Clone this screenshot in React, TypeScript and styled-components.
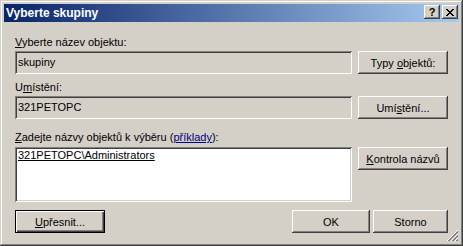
import React from "react";
import styled, { createGlobalStyle } from "styled-components";

const Global = createGlobalStyle`
  html, body { margin: 0; padding: 0; background: #D4D0C8; }
  body { font-family: "Liberation Sans", Arial, sans-serif; font-size: 11px; color: #000; }
  * { box-sizing: border-box; }
`;

const raised = `
  box-shadow: inset -1px -1px #404040, inset 1px 1px #FFFFFF, inset -2px -2px #808080, inset 2px 2px #D4D0C8;
`;
const sunken = `
  box-shadow: inset 1px 1px #808080, inset -1px -1px #FFFFFF, inset 2px 2px #404040, inset -2px -2px #D4D0C8;
`;

const Window = styled.div`
  width: 463px;
  height: 246px;
  padding: 4px;
  background: #D4D0C8;
  display: flex;
  flex-direction: column;
  box-shadow: inset -1px -1px #404040, inset 1px 1px #D4D0C8, inset -2px -2px #808080, inset 2px 2px #FFFFFF;
`;

const TitleBar = styled.div`
  height: 18px;
  display: flex;
  align-items: flex-start;
  padding-left: 2px;
  padding-right: 1px;
  background: linear-gradient(to right, #0A246A, #A6CAF0);
`;

const Title = styled.div`
  flex: 1;
  color: #fff;
  font-weight: bold;
  font-size: 12px;
  line-height: 18px;
  white-space: nowrap;
`;

const CaptionButtons = styled.div`
  display: flex;
  gap: 2px;
  margin-top: 1px;
`;

const CaptionButton = styled.div`
  width: 16px;
  height: 14px;
  background: #D4D0C8;
  ${raised}
  display: flex;
  align-items: center;
  justify-content: center;
  font-weight: bold;
  font-size: 11px;
  line-height: 14px;
`;

const Client = styled.div`
  position: relative;
  flex: 1;
  padding: 14px 10px 0 11px;
  display: grid;
  grid-template-columns: 337px 90px;
  column-gap: 6px;
  align-content: start;
`;

const Label = styled.div<{ $top: number }>`
  grid-column: 1 / -1;
  height: 13px;
  line-height: 13px;
  margin-top: ${(p) => p.$top}px;
  white-space: nowrap;
`;

const Field = styled.div<{ $top: number; $height: number; $white?: boolean }>`
  grid-column: 1;
  margin-top: ${(p) => p.$top}px;
  height: ${(p) => p.$height}px;
  background: ${(p) => (p.$white ? "#FFFFFF" : "#D4D0C8")};
  ${sunken}
  padding: ${(p) => (p.$white ? "2px 3px" : "0 3px")};
  line-height: ${(p) => (p.$white ? "13px" : `${p.$height}px`)};
  white-space: nowrap;
`;

const Button = styled.div<{ $top?: number; $width?: number; $default?: boolean }>`
  margin-top: ${(p) => p.$top ?? 0}px;
  width: ${(p) => (p.$width ? `${p.$width}px` : "auto")};
  height: 23px;
  background: #D4D0C8;
  display: flex;
  align-items: center;
  justify-content: center;
  white-space: pre;
  align-self: start;
  ${(p) =>
    p.$default
      ? `border: 1px solid #000; box-shadow: inset 1px 1px #FFFFFF, inset -1px -1px #404040, inset -2px -2px #808080;`
      : raised}
`;

const SideButton = styled(Button)`
  grid-column: 2;
`;

const Caption = styled.span`
  white-space: nowrap;
`;

const BottomRow = styled.div`
  grid-column: 1 / -1;
  margin-top: 8px;
  display: flex;
  justify-content: space-between;
`;

const RightGroup = styled.div`
  display: flex;
  gap: 3px;
`;

const Link = styled.span`
  color: #000080;
  text-decoration: underline;
`;

const Entry = styled.span`
  text-decoration: underline;
`;

const Grip = styled.svg`
  position: absolute;
  right: 0;
  bottom: 0;
`;

export default function App() {
  return (
    <>
      <Global />
      <Window>
        <TitleBar>
          <Title>Vyberte skupiny</Title>
          <CaptionButtons>
            <CaptionButton>?</CaptionButton>
            <CaptionButton>
              <svg width="8" height="7" viewBox="0 0 8 7" shapeRendering="crispEdges">
                <path d="M0 0h2v1h-2zM6 0h2v1h-2zM1 1h2v1h-2zM5 1h2v1h-2zM2 2h4v1h-4zM3 3h2v1h-2zM2 4h4v1h-4zM1 5h2v1h-2zM5 5h2v1h-2zM0 6h2v1h-2zM6 6h2v1h-2z" fill="#000" />
              </svg>
            </CaptionButton>
          </CaptionButtons>
        </TitleBar>
        <Client>
          <Label $top={0}>
            <u>V</u>yberte název objektu:
          </Label>
          <Field $top={2} $height={23}>skupiny</Field>
          <SideButton $top={2}>
            <Caption>
              Typy <u>o</u>bjektů:
            </Caption>
          </SideButton>
          <Label $top={7}>
            U<u>m</u>ístění:
          </Label>
          <Field $top={2} $height={23}>321PETOPC</Field>
          <SideButton $top={2}>
            <Caption>
              Umí<u>s</u>tění...
            </Caption>
          </SideButton>
          <Label $top={12}>
            <u>Z</u>adejte názvy objektů k výběru (<Link>příklady</Link>):
          </Label>
          <Field $top={3} $height={55} $white>
            <Entry>321PETOPC\Administrators</Entry>
          </Field>
          <SideButton $top={3}>
            <Caption>
              <u>K</u>ontrola názvů
            </Caption>
          </SideButton>
          <BottomRow>
            <Button $width={90} $default>
              <Caption>
                <u>U</u>přesnit...
              </Caption>
            </Button>
            <RightGroup>
              <Button $width={78}>
                <Caption>OK</Caption>
              </Button>
              <Button $width={75}>
                <Caption>Storno</Caption>
              </Button>
            </RightGroup>
          </BottomRow>
          <Grip width="12" height="12" viewBox="0 0 12 12" shapeRendering="crispEdges">
            <path d="M11 0L0 11" stroke="#FFFFFF" />
            <path d="M11 1L1 11M11 2L2 11" stroke="#808080" />
            <path d="M11 4L4 11" stroke="#FFFFFF" />
            <path d="M11 5L5 11M11 6L6 11" stroke="#808080" />
            <path d="M11 8L8 11" stroke="#FFFFFF" />
            <path d="M11 9L9 11M11 10L10 11" stroke="#808080" />
          </Grip>
        </Client>
      </Window>
    </>
  );
}
